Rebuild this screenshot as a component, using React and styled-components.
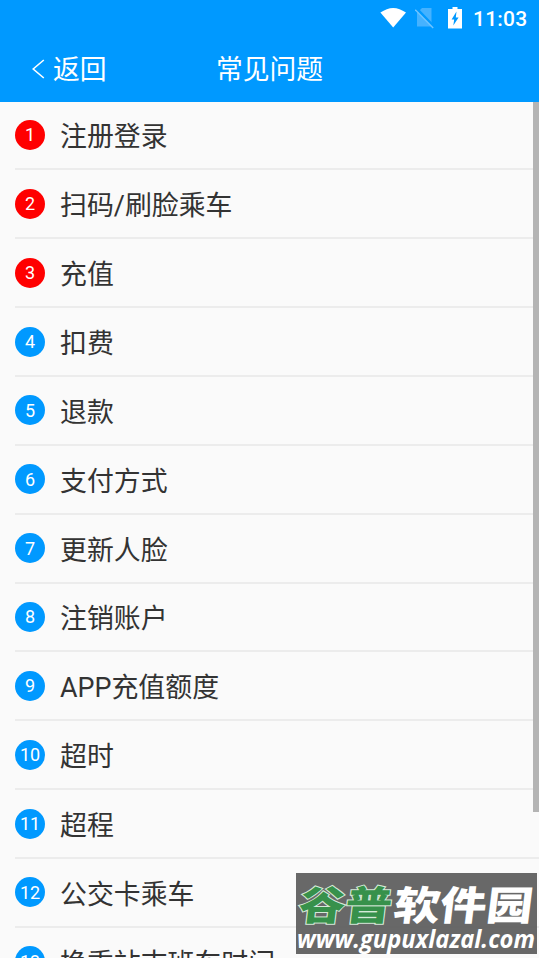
import styled, { createGlobalStyle } from "styled-components"

const questions = [
  "注册登录",
  "扫码/刷脸乘车",
  "充值",
  "扣费",
  "退款",
  "支付方式",
  "更新人脸",
  "注销账户",
  "APP充值额度",
  "超时",
  "超程",
  "公交卡乘车",
  "换乘站末班车时间",
]

const App = () => {
  return (
    <Screen>
      <GlobalStyle />
      <Header>
        <StatusBar>
          <svg width="28" height="22" viewBox="0 0 28 22">
            <path d="M.4 5.6Q13.2-3.8 26 5.6L13.2 20.5Z" fill="#fff" />
          </svg>
          <svg width="20" height="22" viewBox="0 0 20 22">
            <path d="M7 1h9.5v18.5H2V6Z" fill="#45b2ff" />
            <path d="M1.5 1.5L19.5 20" stroke="#0099ff" strokeWidth="2.6" />
            <path d="M.2 2.8L18.2 21" stroke="#70c4ff" strokeWidth="1.4" />
          </svg>
          <svg width="14" height="22" viewBox="0 0 14 22">
            <path d="M4.5 0h5v2H14v19.5H0V2h4.5Z" fill="#fff" />
            <path d="M8.5 4.5L3.6 12.4h2.6L5.3 18.6L10.6 10.4H7.8Z" fill="#0099ff" />
          </svg>
          <Clock>11:03</Clock>
        </StatusBar>
        <NavBar>
          <Back>
            <svg width="13" height="20" viewBox="0 0 13 20">
              <path d="M11.8 1L1.2 10L11.8 19" fill="none" stroke="#fff" strokeWidth="1.6" />
            </svg>
            <NavText>返回</NavText>
          </Back>
          <NavText>常见问题</NavText>
        </NavBar>
      </Header>
      <List>
        {
          questions.map((item, index) =>
            <Row key={item}>
              <Badge $hot={index < 3}>{index + 1}</Badge>
              <Label>{item}</Label>
            </Row>
          )
        }
      </List>
      <ScrollThumb />
      <Watermark>
        <Brand viewBox="0 0 241 53">
          <g transform="skewX(-7)">
            <text x="7" y="47" textLength="93" lengthAdjust="spacingAndGlyphs" className="green">谷普</text>
            <text x="102" y="47" textLength="139" lengthAdjust="spacingAndGlyphs" className="white">软件园</text>
          </g>
        </Brand>
        <Site viewBox="0 0 241 28">
          <text x="1" y="22" textLength="238" lengthAdjust="spacingAndGlyphs">www.gupuxlazal.com</text>
        </Site>
      </Watermark>
    </Screen>
  )
}

export default App;

const GlobalStyle = createGlobalStyle`
  * {
    box-sizing: border-box;
  }

  body {
    margin: 0;
    overflow: hidden;
  }
`

const Screen = styled.div`
  position: relative;
  height: 958px;
  overflow: hidden;
  background: #fafafa;
  color: #333;
  font-family: Roboto, "Noto Sans CJK SC", sans-serif;
`

const Header = styled.header`
  height: 101.5px;
  background: #0099ff;
  color: #fff;
`

const StatusBar = styled.div`
  display: flex;
  align-items: center;
  justify-content: flex-end;
  height: 35px;
  padding-right: 12px;

  svg {
    display: block;
  }

  svg:nth-child(2) {
    margin-left: 7px;
  }

  svg:nth-child(3) {
    margin-left: 13px;
  }
`

const Clock = styled.span`
  width: 54px;
  margin-left: 11px;
  padding-top: 3px;
  font-size: 21px;
  font-weight: 500;
  letter-spacing: 0.2px;
  white-space: nowrap;
`

const NavBar = styled.div`
  display: grid;
  grid-template-columns: 1fr auto 1fr;
  align-items: center;
  height: 67px;
`

const Back = styled.div`
  display: flex;
  align-items: center;
  gap: 8px;
  padding-left: 32px;
`

const NavText = styled.span`
  padding-top: 2px;
  font-size: 26.8px;
  line-height: 40px;
`

const List = styled.div`
  padding-left: 15px;
`

const Row = styled.div`
  display: flex;
  align-items: center;
  height: 68.86px;
  border-bottom: 2px solid #ececec;
`

const Badge = styled.div`
  display: flex;
  align-items: center;
  justify-content: center;
  width: 30px;
  height: 30px;
  border-radius: 50%;
  background: ${({ $hot }) => $hot ? "#ff0000" : "#0099ff"};
  color: #fff;
  font-size: 18px;
`

const Label = styled.div`
  margin-left: 15px;
  padding-top: 5px;
  font-size: 26.9px;
  line-height: 40px;
`

const ScrollThumb = styled.div`
  position: absolute;
  top: 102px;
  right: 0;
  width: 6px;
  height: 710px;
  background: #b4b4b4;
`

const Watermark = styled.div`
  position: absolute;
  left: 295.5px;
  top: 872.5px;
  width: 241px;
  height: 81.5px;
  background: rgba(96, 96, 96, 0.95);
`

const Brand = styled.svg`
  display: block;
  width: 241px;
  height: 53px;
  font-family: "Noto Sans CJK SC", sans-serif;
  font-size: 40px;
  font-weight: 900;

  .green {
    fill: #37914b;
    stroke: #d5ead8;
    stroke-width: 2px;
    paint-order: stroke;
  }

  .white {
    fill: #fff;
  }
`

const Site = styled.svg`
  display: block;
  width: 241px;
  height: 28px;
  overflow: visible;
  fill: #fff;
  font-family: "Open Sans", sans-serif;
  font-size: 25px;
  font-style: italic;
  font-weight: 700;
`
